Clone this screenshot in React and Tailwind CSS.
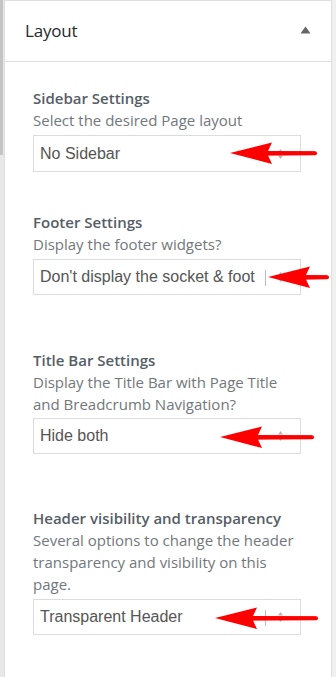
import React from 'react';

const Arrow = ({ tipX, tailX, y }) => {
  // red hand-drawn pointer laid over the select box
  const head = 42;
  return (
    <svg
      className="absolute pointer-events-none"
      style={{ left: tipX - 4, top: y - 14, width: tailX - tipX + 8, height: 28 }}
      viewBox={`0 0 ${tailX - tipX + 8} 28`}
    >
      <path
        d={`M4 14 L${4 + head} 3.5 L${4 + head - 4} 12 L${tailX - tipX + 4} 12.5 L${tailX - tipX + 4} 16 L${4 + head - 4} 16.5 L${4 + head} 25 Z`}
        fill="#f00"
      />
      <line x1={4 + head - 6} y1="14.2" x2={tailX - tipX + 4} y2="14.2" stroke="#f00" strokeWidth="4" strokeLinecap="round" />
    </svg>
  );
};

const UpDown = () => (
  <svg className="absolute right-[16px] top-1/2 -translate-y-1/2" width="7" height="12" viewBox="0 0 7 12">
    <path d="M3.5 1 L6 4.5 H1 Z" fill="#b5b5b5" />
    <path d="M3.5 11 L6 7.5 H1 Z" fill="#b5b5b5" />
  </svg>
);

const Select = ({ value, h = 'h-[36px]', cursor }) => (
  <div className={`relative w-[268px] ${h} border border-[#dcdcdc] bg-white flex items-center`}>
    <div className="pl-[6px] w-[231px] overflow-hidden whitespace-nowrap text-[16px] text-[#555] font-['Liberation_Sans',Arial,sans-serif]">
      {value}
    </div>
    {cursor && <div className="absolute left-[231px] top-[10px] h-[16px] w-px bg-[#bbb]" />}
    <UpDown />
  </div>
);

const Field = ({ title, desc, value, className = '', h, cursor, arrow, selectMt = 'mt-[4px]' }) => (
  <div className={className}>
    <div className="text-[15px] leading-[22px] font-semibold text-[#555d66]">{title}</div>
    <div className="text-[15px] leading-[22px] text-[#72777c]">{desc}</div>
    <div className={`relative ${selectMt}`}>
      <Select value={value} h={h} cursor={cursor} />
      {arrow}
    </div>
  </div>
);

export default function App() {
  return (
    <div className="min-h-screen h-[677px] bg-[#f0f0f1] flex font-['Open_Sans','Noto_Sans',sans-serif] overflow-hidden">
      <div className="w-[4px] shrink-0 bg-[#e8e8e8]">
        <div className="w-[3px] h-[155px] bg-[#c4c4c4]" />
      </div>
      <div className="w-[328px] shrink-0 bg-white border border-[#dedede] border-b-0">
        <div className="h-[61px] border-b border-[#e2e2e2] flex items-center justify-between pl-[20px] pr-[20px]">
          <span className="text-[17px] text-[#23282d] tracking-[-0.2px]">Layout</span>
          <svg width="11" height="8" viewBox="0 0 11 8" className="mb-[2px]">
            <path d="M5.5 0.5 L10.5 7.5 H0.5 Z" fill="#666" />
          </svg>
        </div>
        <div className="pl-[28px] pt-[25px]">
          <Field
            title="Sidebar Settings"
            desc="Select the desired Page layout"
            value="No Sidebar"
            h="h-[37px]"
            arrow={<Arrow tipX={197} tailX={282} y={18} />}
          />
          <Field
            className="mt-[39px]"
            title="Footer Settings"
            desc="Display the footer widgets?"
            value="Don't display the socket & foot"
            cursor
            arrow={<Arrow tipX={235} tailX={294} y={18} />}
          />
          <Field
            className="mt-[54px]"
            title="Title Bar Settings"
            desc={<>Display the Title Bar with Page Title<br />and Breadcrumb Navigation?</>}
            value="Hide both"
            selectMt="mt-[3px]"
            arrow={<Arrow tipX={187} tailX={279} y={19} />}
          />
          <Field
            className="mt-[53px]"
            title="Header visibility and transparency"
            desc={<>Several options to change the header<br />transparency and visibility on this<br />page.</>}
            value="Transparent Header"
            cursor
            arrow={<Arrow tipX={182} tailX={283} y={19} />}
          />
        </div>
      </div>
      <div className="flex-1 bg-[#f0f0f1]" />
    </div>
  );
}
